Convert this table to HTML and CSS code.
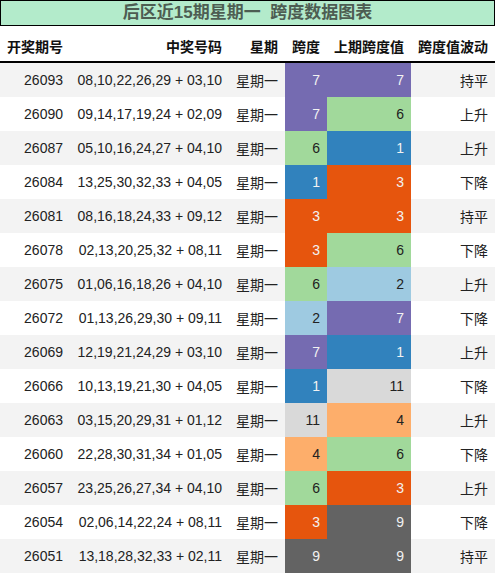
FILE: index.html
```html
<!DOCTYPE html>
<html lang="zh-CN">
<head>
    <meta charset="UTF-8">
    <meta name="viewport" content="width=device-width, initial-scale=1.0">
    <title>后区近15期星期一 跨度数据图表</title>
    <link rel="stylesheet" href="styles.css">
</head>
<body>
    <div class="chart">
        <div class="chart-title">后区近15期星期一  跨度数据图表</div>
        <table class="span-table">
            <colgroup>
                <col class="w-issue">
                <col class="w-nums">
                <col class="w-day">
                <col class="w-span">
                <col class="w-prev">
                <col class="w-trend">
            </colgroup>
            <thead>
                <tr>
                    <th>开奖期号</th>
                    <th>中奖号码</th>
                    <th>星期</th>
                    <th>跨度</th>
                    <th>上期跨度值</th>
                    <th>跨度值波动</th>
                </tr>
            </thead>
            <tbody>
                <tr><td>26093</td><td>08,10,22,26,29 + 03,10</td><td>星期一</td><td class="v7">7</td><td class="v7">7</td><td>持平</td></tr>
                <tr><td>26090</td><td>09,14,17,19,24 + 02,09</td><td>星期一</td><td class="v7">7</td><td class="v6">6</td><td>上升</td></tr>
                <tr><td>26087</td><td>05,10,16,24,27 + 04,10</td><td>星期一</td><td class="v6">6</td><td class="v1">1</td><td>上升</td></tr>
                <tr><td>26084</td><td>13,25,30,32,33 + 04,05</td><td>星期一</td><td class="v1">1</td><td class="v3">3</td><td>下降</td></tr>
                <tr><td>26081</td><td>08,16,18,24,33 + 09,12</td><td>星期一</td><td class="v3">3</td><td class="v3">3</td><td>持平</td></tr>
                <tr><td>26078</td><td>02,13,20,25,32 + 08,11</td><td>星期一</td><td class="v3">3</td><td class="v6">6</td><td>下降</td></tr>
                <tr><td>26075</td><td>01,06,16,18,26 + 04,10</td><td>星期一</td><td class="v6">6</td><td class="v2">2</td><td>上升</td></tr>
                <tr><td>26072</td><td>01,13,26,29,30 + 09,11</td><td>星期一</td><td class="v2">2</td><td class="v7">7</td><td>下降</td></tr>
                <tr><td>26069</td><td>12,19,21,24,29 + 03,10</td><td>星期一</td><td class="v7">7</td><td class="v1">1</td><td>上升</td></tr>
                <tr><td>26066</td><td>10,13,19,21,30 + 04,05</td><td>星期一</td><td class="v1">1</td><td class="v11">11</td><td>下降</td></tr>
                <tr><td>26063</td><td>03,15,20,29,31 + 01,12</td><td>星期一</td><td class="v11">11</td><td class="v4">4</td><td>上升</td></tr>
                <tr><td>26060</td><td>22,28,30,31,34 + 01,05</td><td>星期一</td><td class="v4">4</td><td class="v6">6</td><td>下降</td></tr>
                <tr><td>26057</td><td>23,25,26,27,34 + 04,10</td><td>星期一</td><td class="v6">6</td><td class="v3">3</td><td>上升</td></tr>
                <tr><td>26054</td><td>02,06,14,22,24 + 08,11</td><td>星期一</td><td class="v3">3</td><td class="v9">9</td><td>下降</td></tr>
                <tr><td>26051</td><td>13,18,28,32,33 + 02,11</td><td>星期一</td><td class="v9">9</td><td class="v9">9</td><td>持平</td></tr>
            </tbody>
        </table>
    </div>
</body>
</html>
```

FILE: styles.css
```css
body {
    margin: 0;
    background-color: #ffffff;
    font-family: "Liberation Sans", "Noto Sans CJK SC", sans-serif;
    color: #222222;
}
.chart {
    width: 495px;
}
.chart-title {
    height: 24px;
    line-height: 24px;
    border: 1px solid #000000;
    background-color: #b3ebcb;
    color: #4d5d52;
    font-size: 17px;
    font-weight: bold;
    text-align: center;
    white-space: pre;
}
.span-table {
    width: 495px;
    border-collapse: collapse;
    table-layout: fixed;
    font-size: 14px;
}
.w-issue { width: 70px; }
.w-nums { width: 159px; }
.w-day { width: 56px; }
.w-span { width: 42px; }
.w-prev { width: 84px; }
.w-trend { width: 84px; }
.span-table th,
.span-table td {
    height: 34px;
    padding: 0 7px 0 0;
    text-align: right;
    white-space: nowrap;
}
.span-table th {
    height: 31px;
    padding-top: 4px;
    font-weight: bold;
    color: #111111;
    border-bottom: 2px solid #000000;
}
.span-table tbody tr:nth-child(odd) {
    background-color: #f3f3f3;
}
.span-table tbody tr:nth-child(even) {
    background-color: #ffffff;
}
.span-table td.v1 { background-color: #3182bd; color: #f2f2f2; }
.span-table td.v2 { background-color: #9ecae1; color: #222222; }
.span-table td.v3 { background-color: #e6550d; color: #f2f2f2; }
.span-table td.v4 { background-color: #fdae6b; color: #222222; }
.span-table td.v6 { background-color: #a1d99b; color: #222222; }
.span-table td.v7 { background-color: #756bb1; color: #f2f2f2; }
.span-table td.v9 { background-color: #636363; color: #f2f2f2; }
.span-table td.v11 { background-color: #d9d9d9; color: #222222; }
```
